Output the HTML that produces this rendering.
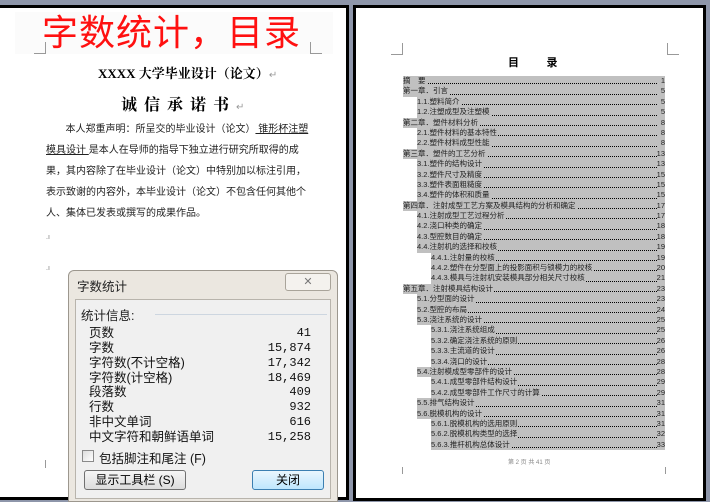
<!DOCTYPE html>
<html><head><meta charset="utf-8"><style>
*{margin:0;padding:0;box-sizing:border-box}
body{width:710px;height:501px;background:#8e96aa;position:relative;overflow:hidden;font-family:"Liberation Sans","Noto Sans CJK SC",sans-serif}
.pg{position:absolute;background:#fff;border:3px solid #000}
.abs{position:absolute;white-space:nowrap}
.c{position:absolute;border-color:#999;border-style:solid;width:12px;height:12px}
.toc{position:absolute;left:403px;top:76px;width:262px}
.r{height:10.4px;position:relative;font-size:7.5px;line-height:10.4px;color:#222}
.r span{background:#c0c0c0;display:block;position:absolute;right:0;top:0;height:10.4px;padding-right:0}
.r span i{position:absolute;left:0;right:8px;bottom:2px;border-bottom:1px dotted #000}
.r span b{font-weight:normal;position:relative;background:#c0c0c0;padding-right:1px}
.r span em{position:absolute;right:0;font-style:normal;background:#c0c0c0}
.dlg{position:absolute;left:68px;top:270px;width:270px;height:232px;background:#ebe7e0;border:1px solid #9c978e;border-radius:6px 6px 0 0}
.row{position:absolute;left:20px;width:200px;font-size:12.5px;line-height:15px;color:#111}
.row b{font-weight:normal;position:absolute;right:-22px;font-family:"Liberation Mono",monospace;font-size:12px}
</style></head><body>
<div class="pg" style="left:-3px;top:5px;width:352px;height:495px"></div>
<div class="pg" style="left:353px;top:5px;width:353px;height:496px"></div>
<div class="abs" style="left:15px;top:12px;width:318px;height:42px;background:#fbfbfb"></div>
<div class="abs" style="left:42px;top:11px;font-size:36px;line-height:44px;color:#ff1010;letter-spacing:1px">字数统计，目录</div>
<div class="c" style="left:34px;top:42px;border-width:0 1px 1px 0"></div>
<div class="c" style="left:310px;top:42px;border-width:0 0 1px 1px"></div>
<div class="abs" style="left:98px;top:63px;font-size:13px;font-weight:bold;font-family:'Liberation Serif','Noto Serif CJK SC',serif">XXXX 大学毕业设计（论文）<span style="color:#999;font-weight:normal;font-size:10px">↵</span></div>
<div class="abs" style="left:121px;top:92px;font-size:16px;font-weight:bold;letter-spacing:7px;font-family:'Liberation Serif','Noto Serif CJK SC',serif">诚信承诺书<span style="color:#999;font-weight:normal;font-size:10px;letter-spacing:0">↵</span></div>
<div class="abs" style="left:46px;top:119px;font-size:10px;line-height:21px;color:#222;width:266px;white-space:normal">&nbsp;&nbsp;&nbsp;&nbsp;&nbsp;&nbsp;&nbsp;本人郑重声明：所呈交的毕业设计（论文）<u>&nbsp;锥形杯注塑模具设计&nbsp;</u>是本人在导师的指导下独立进行研究所取得的成果，其内容除了在毕业设计（论文）中特别加以标注引用，表示致谢的内容外，本毕业设计（论文）不包含任何其他个人、集体已发表或撰写的成果作品。</div>
<div class="abs" style="left:46px;top:234px;font-size:7px;color:#777">.ı</div>
<div class="abs" style="left:46px;top:265px;font-size:7px;color:#777">.ı</div>
<div class="abs" style="left:45px;top:460px;width:1px;height:8px;background:#999"></div>

<div class="c" style="left:391px;top:43px;border-width:0 1px 1px 0"></div>
<div class="c" style="left:667px;top:43px;border-width:0 0 1px 1px"></div>
<div class="abs" style="left:508px;top:54px;font-size:11px;font-weight:bold">目&nbsp;&nbsp;&nbsp;&nbsp;&nbsp;&nbsp;&nbsp;&nbsp;&nbsp;录</div>
<div class="toc">
<div class="r"><span style="left:0"><i></i><b>摘　要</b><em>1</em></span></div>
<div class="r"><span style="left:0"><i></i><b>第一章．引言</b><em>5</em></span></div>
<div class="r"><span style="left:14px"><i></i><b>1.1.塑料简介</b><em>5</em></span></div>
<div class="r"><span style="left:14px"><i></i><b>1.2.注塑成型及注塑模</b><em>5</em></span></div>
<div class="r"><span style="left:0"><i></i><b>第二章．塑件材料分析</b><em>8</em></span></div>
<div class="r"><span style="left:14px"><i></i><b>2.1.塑件材料的基本特性</b><em>8</em></span></div>
<div class="r"><span style="left:14px"><i></i><b>2.2.塑件材料成型性能</b><em>8</em></span></div>
<div class="r"><span style="left:0"><i></i><b>第三章．塑件的工艺分析</b><em>13</em></span></div>
<div class="r"><span style="left:14px"><i></i><b>3.1.塑件的结构设计</b><em>13</em></span></div>
<div class="r"><span style="left:14px"><i></i><b>3.2.塑件尺寸及精度</b><em>15</em></span></div>
<div class="r"><span style="left:14px"><i></i><b>3.3.塑件表面粗糙度</b><em>15</em></span></div>
<div class="r"><span style="left:14px"><i></i><b>3.4.塑件的体积和质量</b><em>15</em></span></div>
<div class="r"><span style="left:0"><i></i><b>第四章．注射成型工艺方案及模具结构的分析和确定</b><em>17</em></span></div>
<div class="r"><span style="left:14px"><i></i><b>4.1.注射成型工艺过程分析</b><em>17</em></span></div>
<div class="r"><span style="left:14px"><i></i><b>4.2.浇口种类的确定</b><em>18</em></span></div>
<div class="r"><span style="left:14px"><i></i><b>4.3.型腔数目的确定</b><em>18</em></span></div>
<div class="r"><span style="left:14px"><i></i><b>4.4.注射机的选择和校核</b><em>19</em></span></div>
<div class="r"><span style="left:28px"><i></i><b>4.4.1.注射量的校核</b><em>19</em></span></div>
<div class="r"><span style="left:28px"><i></i><b>4.4.2.塑件在分型面上的投影面积与锁模力的校核</b><em>20</em></span></div>
<div class="r"><span style="left:28px"><i></i><b>4.4.3.模具与注射机安装模具部分相关尺寸校核</b><em>21</em></span></div>
<div class="r"><span style="left:0"><i></i><b>第五章．注射模具结构设计</b><em>23</em></span></div>
<div class="r"><span style="left:14px"><i></i><b>5.1.分型面的设计</b><em>23</em></span></div>
<div class="r"><span style="left:14px"><i></i><b>5.2.型腔的布局</b><em>24</em></span></div>
<div class="r"><span style="left:14px"><i></i><b>5.3.浇注系统的设计</b><em>25</em></span></div>
<div class="r"><span style="left:28px"><i></i><b>5.3.1.浇注系统组成</b><em>25</em></span></div>
<div class="r"><span style="left:28px"><i></i><b>5.3.2.确定浇注系统的原则</b><em>26</em></span></div>
<div class="r"><span style="left:28px"><i></i><b>5.3.3.主流道的设计</b><em>26</em></span></div>
<div class="r"><span style="left:28px"><i></i><b>5.3.4.浇口的设计</b><em>28</em></span></div>
<div class="r"><span style="left:14px"><i></i><b>5.4.注射模成型零部件的设计</b><em>28</em></span></div>
<div class="r"><span style="left:28px"><i></i><b>5.4.1.成型零部件结构设计</b><em>29</em></span></div>
<div class="r"><span style="left:28px"><i></i><b>5.4.2.成型零部件工作尺寸的计算</b><em>29</em></span></div>
<div class="r"><span style="left:14px"><i></i><b>5.5.排气结构设计</b><em>31</em></span></div>
<div class="r"><span style="left:14px"><i></i><b>5.6.脱模机构的设计</b><em>31</em></span></div>
<div class="r"><span style="left:28px"><i></i><b>5.6.1.脱模机构的选用原则</b><em>31</em></span></div>
<div class="r"><span style="left:28px"><i></i><b>5.6.2.脱模机构类型的选择</b><em>32</em></span></div>
<div class="r"><span style="left:28px"><i></i><b>5.6.3.推杆机构总体设计</b><em>33</em></span></div>
</div>
<div class="abs" style="left:508px;top:457px;font-size:6px;color:#888">第 2 页 共 41 页</div>
<div class="abs" style="left:402px;top:467px;width:1px;height:7px;background:#999"></div>
<div class="abs" style="left:665px;top:467px;width:1px;height:7px;background:#999"></div>

<div class="dlg">
<div class="abs" style="left:8px;top:5px;font-size:12.5px;color:#222">字数统计</div>
<div class="abs" style="left:216px;top:2px;width:46px;height:18px;border:1px solid #a9a49a;border-radius:3px;background:#f4f2ee;font-size:11px;color:#777;text-align:center;line-height:16px">✕</div>
<div class="abs" style="left:6px;top:28px;width:256px;height:200px;background:#f0f0f0;border:1px solid #b8b4ac"></div>
<div class="abs" style="left:12px;top:34px;font-size:12.5px;color:#222">统计信息:</div>
<div class="abs" style="left:86px;top:43px;width:172px;height:1px;background:#cdd6e0"></div>
<div class="row" style="top:55px">页数<b>41</b></div>
<div class="row" style="top:70px">字数<b>15,874</b></div>
<div class="row" style="top:85px">字符数(不计空格)<b>17,342</b></div>
<div class="row" style="top:100px">字符数(计空格)<b>18,469</b></div>
<div class="row" style="top:114px">段落数<b>409</b></div>
<div class="row" style="top:129px">行数<b>932</b></div>
<div class="row" style="top:144px">非中文单词<b>616</b></div>
<div class="row" style="top:159px">中文字符和朝鲜语单词<b>15,258</b></div>
<div class="abs" style="left:13px;top:179px;width:12px;height:12px;border:1px solid #8a8a8a;background:linear-gradient(135deg,#ddd,#fff)"></div>
<div class="abs" style="left:30px;top:177px;font-size:12.5px;color:#111">包括脚注和尾注 (F)</div>
<div class="abs" style="left:15px;top:199px;width:102px;height:20px;border:1px solid #707070;border-radius:3px;background:linear-gradient(#f6f6f6,#dcdcdc);font-size:12px;text-align:center;line-height:18px">显示工具栏 (S)</div>
<div class="abs" style="left:183px;top:199px;width:72px;height:20px;border:1px solid #3c7fb1;border-radius:3px;background:linear-gradient(#eaf6fd,#bee6fd);font-size:12px;text-align:center;line-height:18px">关闭</div>
</div>
</body></html>
